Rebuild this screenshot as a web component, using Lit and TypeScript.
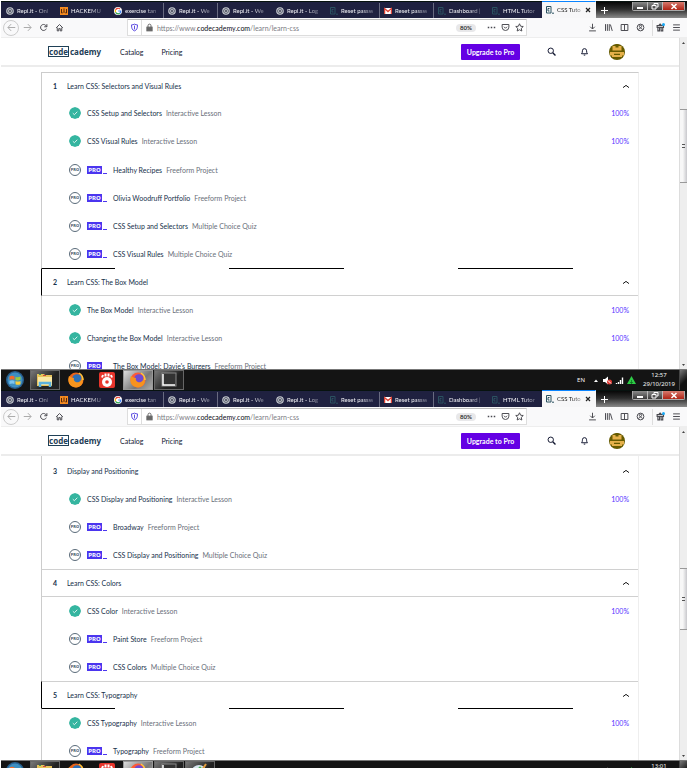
import { LitElement, html, css, svg, nothing } from "lit";
import { customElement, property } from "lit/decorators.js";
import { classMap } from "lit/directives/class-map.js";

type Item = { title: string; kind: string; pro?: boolean };
type Section = { no: number; title: string; look: string; items: Item[] };
type Tab = { icon: string; text: string; sep?: boolean; active?: boolean };

const LESSON = "Interactive Lesson";
const PROJECT = "Freeform Project";
const QUIZ = "Multiple Choice Quiz";

const firstSections: Section[] = [
  {
    no: 1, title: "Learn CSS: Selectors and Visual Rules", look: "flat",
    items: [
      { title: "CSS Setup and Selectors", kind: LESSON },
      { title: "CSS Visual Rules", kind: LESSON },
      { title: "Healthy Recipes", kind: PROJECT, pro: true },
      { title: "Olivia Woodruff Portfolio", kind: PROJECT, pro: true },
      { title: "CSS Setup and Selectors", kind: QUIZ, pro: true },
      { title: "CSS Visual Rules", kind: QUIZ, pro: true },
    ],
  },
  {
    no: 2, title: "Learn CSS: The Box Model", look: "dash-top",
    items: [
      { title: "The Box Model", kind: LESSON },
      { title: "Changing the Box Model", kind: LESSON },
      { title: "The Box Model: Davie's Burgers", kind: PROJECT, pro: true },
    ],
  },
];

const secondSections: Section[] = [
  {
    no: 3, title: "Display and Positioning", look: "cut",
    items: [
      { title: "CSS Display and Positioning", kind: LESSON },
      { title: "Broadway", kind: PROJECT, pro: true },
      { title: "CSS Display and Positioning", kind: QUIZ, pro: true },
    ],
  },
  {
    no: 4, title: "Learn CSS: Colors", look: "",
    items: [
      { title: "CSS Color", kind: LESSON },
      { title: "Paint Store", kind: PROJECT, pro: true },
      { title: "CSS Colors", kind: QUIZ, pro: true },
    ],
  },
  {
    no: 5, title: "Learn CSS: Typography", look: "dash-bottom",
    items: [
      { title: "CSS Typography", kind: LESSON },
      { title: "Typography", kind: PROJECT, pro: true },
    ],
  },
];

const tabs: Tab[] = [
  { icon: "repl", text: "Repl.it - Onl" },
  { icon: "hack", text: "HACKEMU" },
  { icon: "google", text: "exercise tan", sep: true },
  { icon: "repl", text: "Repl.it - We", sep: true },
  { icon: "repl", text: "Repl.it - We" },
  { icon: "repl", text: "Repl.it - Log" },
  { icon: "code", text: "Reset passw", sep: true },
  { icon: "mail", text: "Reset passw", sep: true },
  { icon: "code", text: "Dashboard |" },
  { icon: "code", text: "HTML Tutor" },
  { icon: "code", text: "CSS Tuto", active: true },
];

const tabIcon = (name: string) => {
  switch (name) {
    case "repl":
      return svg`<circle cx="4" cy="4" r="3.8" fill="#c9ccd2"/><circle cx="4" cy="4" r="2.4" fill="none" stroke="#555b6b"/><circle cx="4" cy="4" r="1" fill="#3d4252"/>`;
    case "hack":
      return svg`<rect width="8" height="8" fill="#f58a1f"/><path d="M1.5 2v4M4 1.5v3M6.5 2v4M2 6.5l2-2 2 2" stroke="#57280a" fill="none"/>`;
    case "google":
      return svg`<circle cx="4" cy="4" r="4" fill="#fff"/><path d="M6 2A2.8 2.8 0 0 0 1.6 2.8" stroke="#ea4335" fill="none" stroke-width="1.2"/><path d="M1.6 2.8a2.8 2.8 0 0 0 0 2.4" stroke="#fbbc05" fill="none" stroke-width="1.2"/><path d="M1.6 5.2A2.8 2.8 0 0 0 5.8 6.2" stroke="#34a853" fill="none" stroke-width="1.2"/><path d="M5.8 6.2A2.8 2.8 0 0 0 6.8 4H4.2" stroke="#4285f4" fill="none" stroke-width="1.2"/>`;
    case "mail":
      return svg`<rect y="1" width="8" height="6" rx="1" fill="#fff"/><path d="M.6 7V1.6L4 4.6l3.4-3V7" stroke="#dc4437" stroke-width="1.3" fill="none"/>`;
    default:
      return svg`<path d="M.5 .5h4.5v6.500H.5z" fill="none" stroke="#2b5260"/><path d="M3.500 2.500H2v2.500h1.500M6 7.200h2" stroke="#2b5260" fill="none"/>`;
  }
};

const glyphs: Record<string, unknown> = {
  back: svg`<path d="M11 6H1.500M5.500 1.500L1.200 6l4.300 4.500"/>`,
  forward: svg`<path d="M1 6h9.500M6.500 1.500L10.800 6l-4.300 4.500"/>`,
  reload: svg`<path d="M9.800 7.500A4 4 0 1 1 9 3.200L10.500 5M10.500 1.500V5H7"/>`,
  home: svg`<path d="M1.500 6.500L6 2l4.500 4.500M3 6v4.500h2v-3h2v3h2V6"/>`,
  shield: svg`<path d="M6 1.500c1.500 .8 2.500 1 4 1C10 7 9 9.500 6 10.500 3 9.500 2 7 2 2.500c1.500 0 2.500-.2 4-1zM6 3.500v5"/>`,
  lock: svg`<rect x="2.500" y="5.500" width="7" height="5" fill="currentColor"/><path d="M4 5.500v-2a2 2 0 0 1 4 0v2"/>`,
  dots: svg`<path d="M1 6h2M5 6h2M9 6h2" stroke-width="2"/>`,
  pocket: svg`<path d="M1.500 2h9v3.500a4.500 4.500 0 0 1-9 0zM4 5l2 2 2-2"/>`,
  star: svg`<path d="M6 1l1.500 3.300 3.500.4-2.600 2.400.7 3.600L6 9l-3.100 1.700.7-3.600L1 4.700l3.500-.4z"/>`,
  download: svg`<path d="M6 1v7M3 5l3 3 3-3M1.500 10.500h9"/>`,
  library: svg`<path d="M2 1.500v9M4.500 1.500v9M7 1.500v9M8.500 2l2.500 8.500"/>`,
  sidebar: svg`<path d="M1.500 2h9v8h-9zM6 2v8"/>`,
  account: svg`<circle cx="6" cy="6" r="4.500"/><circle cx="6" cy="4.500" r="1.500"/><path d="M3.500 9c.5-3 4.500-3 5 0"/>`,
  gift: svg`<path d="M1.500 3.500h8.500V6H1.500zM2.500 6v4.500h2.200V6M6.800 6v4.500H9V6M4 3l1.500-1.500L7 3" stroke-width="1.500"/><circle cx="10" cy="2" r="2" fill="#19a8f5" stroke="none"/>`,
  menu: svg`<path d="M1.500 2.500h9M1.500 6h9M1.500 9.500h9"/>`,
  search: svg`<circle cx="5" cy="5" r="3.600"/><path d="M7.700 7.700l3.600 3.600" stroke-width="1.800"/>`,
  bell: svg`<path d="M2 9c1-1 1.200-2 1.200-4a2.800 2.800 0 0 1 5.600 0c0 2 .2 3 1.200 4zM5 10.800h2"/>`,
  up: svg`<path d="M4 7.500l4-3 4 3"/>`,
};

const glyph = (name: string) => html`<svg class="glyph" viewBox="0 0 12 12" aria-hidden="true">${glyphs[name]}</svg>`;
const iconButton = (name: string, label: string) =>
  html`<button class="icon ${name}" aria-label=${label}>${glyph(name)}</button>`;

const base = css`
  * { box-sizing: border-box; }
  button { font: inherit; color: inherit; background: none; border: 0; padding: 0; }
  a { color: inherit; text-decoration: none; }
  svg { display: block; flex: none; }
  .glyph { width: 9px; height: 9px; fill: none; stroke: currentColor; stroke-width: 1.3; }
`;

@customElement("browser-chrome")
export class BrowserChrome extends LitElement {
  static styles = [base, css`
    :host { display: block; font: 6px/8px Lato, sans-serif; }
    .tabs { display: flex; height: 17px; padding: 1px 0 0 1px; background: #1f2140; border-top: 1px solid #07120f; color: #f4f4f8; }
    .tab { flex: 0 1 54px; min-width: 0; display: flex; align-items: center; gap: 3px; padding-left: 4px; border-right: 1px solid transparent; }
    .tab svg { width: 8px; height: 8px; }
    .tab.sep { border-right-color: #686a80; }
    .name { white-space: nowrap; -webkit-mask-image: linear-gradient(90deg, #000 60%, #0005); }
    .tab.active { margin-top: -2px; padding-right: 4px; background: #f7f7f8; border-top: 1px solid #0a84ff; color: #222; }
    .close { width: 6px; margin-left: auto; display: grid; place-items: center; }
    .close svg { width: 6px; height: 6px; }
    .caption { flex: 1; margin-top: -1px; display: flex; justify-content: space-between; align-items: flex-start; background: linear-gradient(#080808, #2d2d2d 45%, #8a8a8a); }
    .add { width: 16px; height: 16px; display: grid; place-items: center; }
    .add svg { width: 8px; height: 8px; }
    .window { display: flex; height: 9px; margin-right: 2px; border: 1px solid #aaa; border-top: 0; border-radius: 0 0 2px 2px; overflow: hidden; }
    .window button { width: 15px; background: linear-gradient(#8a8a8a, #3a3a3a); border-right: 1px solid #bbb; display: grid; place-items: center; }
    .window .end { width: 21px; border: 0; background: linear-gradient(#d67a6e, #b02314); }
    .window svg { width: 8px; height: 7px; }
    .bar { display: flex; align-items: center; height: 20px; background: #f9f9fa; border-bottom: 1px solid #eee; color: #4a4a50; padding: 0 3px 0 2px; }
    .icon { width: 16px; height: 16px; display: grid; place-items: center; flex: none; }
    .back { border: 1px solid #ccc; border-radius: 8px; color: #aaa; }
    .forward { color: #aaa; }
    .address { flex: 0 1 400px; min-width: 120px; display: flex; align-items: center; height: 17px; margin: 0 auto 0 60px; background: #fff; border: 1px solid #ddd; border-top-color: #bbb; border-radius: 1px; }
    .address .icon { width: 14px; }
    .shield { color: #5b4be0; border-right: 1px solid #ddd; }
    .lock { color: #666; }
    .url { flex: 1; min-width: 0; font-size: 7px; line-height: 10px; padding-left: 1px; color: #7c7c84; white-space: nowrap; }
    .url b { font-weight: normal; color: #0c0c20; }
    .zoom { width: 20px; height: 8px; border-radius: 4px; background: #e8e8ea; text-align: center; font-weight: bold; margin-right: 8px; color: #333; }
    .right { display: flex; }
    .gift { margin-left: 4px; border-left: 1px solid #ddd; }
  `];

  render() {
    return html`
      <div class="tabs" role="tablist">
        ${tabs.map((t) => html`
          <div role="tab" class=${classMap({ tab: true, sep: !!t.sep, active: !!t.active })}>
            <svg viewBox="0 0 8 8" aria-hidden="true">${tabIcon(t.icon)}</svg>
            <span class="name">${t.text}</span>
            ${t.active ? html`<button class="close" aria-label="Close tab"><svg viewBox="0 0 6 6"><path d="M1 1l4 4M5 1L1 5" stroke="#222" stroke-width="1.200"/></svg></button>` : nothing}
          </div>`)}
        <div class="caption">
          <button class="add" aria-label="New tab"><svg viewBox="0 0 8 8"><path d="M4.500 1v7M1 4.500h7" stroke="#fff"/></svg></button>
          <div class="window">
            <button aria-label="Minimise"><svg viewBox="0 0 8 7"><path d="M1 5h6" stroke="#fff" stroke-width="2"/></svg></button>
            <button aria-label="Restore"><svg viewBox="0 0 8 7"><path d="M3 2V.5h4V4H5.500M1 2.500h4v3.500H1z" stroke="#fff" fill="none"/></svg></button>
            <button class="end" aria-label="Close"><svg viewBox="0 0 8 7"><path d="M1.500 1l5 5M6.500 1l-5 5" stroke="#fff" stroke-width="1.600"/></svg></button>
          </div>
        </div>
      </div>
      <div class="bar">
        ${iconButton("back", "Back")}${iconButton("forward", "Forward")}${iconButton("reload", "Reload")}${iconButton("home", "Home")}
        <div class="address">
          ${iconButton("shield", "Tracking protection")}${iconButton("lock", "Connection secure")}
          <div class="url" role="textbox" aria-label="Address">https://www.<b>codecademy.com</b>/learn/learn-css</div>
          <button class="zoom">80%</button>
          ${iconButton("dots", "Page actions")}${iconButton("pocket", "Save to Pocket")}${iconButton("star", "Bookmark")}
        </div>
        <div class="right">
          ${iconButton("download", "Downloads")}${iconButton("library", "Library")}${iconButton("sidebar", "Sidebars")}${iconButton("account", "Account")}${iconButton("gift", "What's new")}${iconButton("menu", "Menu")}
        </div>
      </div>`;
  }
}

@customElement("course-page")
export class CoursePage extends LitElement {
  @property({ attribute: false }) sections: Section[] = [];
  @property({ attribute: false }) lower = false;

  static styles = [base, css`
    :host { display: flex; overflow: hidden; background: #fff; font: 7px/10px Lato, sans-serif; color: #16304a; }
    .content { flex: 1; min-width: 0; }
    header { display: flex; align-items: center; height: 29px; padding: 0 54px 0 47px; border-bottom: 2px solid #ececec; }
    .logo { display: flex; align-items: center; font: bold 8px/9px "Noto Sans", sans-serif; color: #1f4056; margin-right: 19px; }
    .logo span { border: 1px solid #1f4056; margin-right: 1px; }
    .nav { margin-right: 18px; color: #10162f; }
    .upgrade { width: 59px; height: 16px; margin-left: auto; background: #6400e4; color: #fff; font-weight: bold; border-radius: 1px; white-space: nowrap; }
    .icon { width: 13px; margin-left: 20px; display: grid; place-items: center; color: #10162f; }
    .icon.search { margin-left: 25px; }
    .avatar { width: 16px; height: 16px; margin-left: 18px; }
    .card { margin: 5px 40px 0; border: 1px solid #ccc; border-right-color: #eee; border-bottom: 0; }
    .card.lower { margin-top: 0; border-top: 0; }
    .head { display: flex; align-items: center; height: 28px; margin-left: -1px; padding: 0 9px 0 11px; border: solid #d0d0d0; border-width: 1px 0; border-left: 1px solid #ccc; }
    .no { width: 14px; font-weight: bold; }
    h2 { flex: 1; margin: 0; font: inherit; }
    .flat .head { height: 26px; border-top: 0; border-bottom: 0; }
    .flat .plain + .pro { margin-top: 1px; }
    .cut .head { height: 29px; padding-top: 1px; border-top: 0; border-bottom: 0; }
    .dash-top .head { border-top-color: transparent; border-left-color: #000; background: linear-gradient(90deg, #000 115px, transparent 115px) -41px 0 / 229px 1px repeat-x border-box; }
    .dash-bottom .head { border-bottom-color: transparent; border-left-color: #000; background: linear-gradient(90deg, #000 115px, transparent 115px) -41px 100% / 229px 1px repeat-x border-box; }
    ul { margin: 0; padding: 0; list-style: none; }
    li { display: flex; align-items: center; height: 28px; padding: 0 9px 0 27px; white-space: nowrap; }
    .mark { width: 12px; height: 12px; margin-right: 6px; flex: none; border-radius: 6px; }
    .ring { display: grid; place-items: center; border: 1px solid #5a6b7a; font: bold 4px/4px "Noto Sans", sans-serif; color: #3b5063; }
    .tag { display: flex; margin-right: 6px; width: 20px; color: #4b35ef; }
    .tag b { width: 15px; height: 8px; background: #4b35ef; color: #fff; font: bold 6px/8px "Noto Sans", sans-serif; text-align: center; }
    .tag i { width: 4px; margin-left: 1px; border-bottom: 1px solid #4b35ef; }
    .kind { margin-left: 4px; color: #6a6f7a; }
    .done { margin-left: auto; color: #5533ff; }
    .chevron { color: #111; }
    .scroll { width: 8px; flex: none; display: flex; flex-direction: column; align-items: center; background: #eee; border-left: 1px solid #ddd; color: #444; }
    .scroll .arrow { height: 9px; display: grid; place-items: center; }
    .scroll .arrow svg { width: 3px; height: 2px; }
    .gap { height: 62px; }
    .gap.lower { height: 132px; }
    .thumb { width: 7px; height: 74px; display: grid; place-items: center; background: linear-gradient(90deg, #f7f7f7 40%, #c8c8cc); border: solid #999; border-width: 1px 0; }
    .thumb.lower { height: 62px; }
    .grip { width: 3px; height: 4px; border: solid #555; border-width: 1px 0; }
    .rest { flex: 1; }
  `];

  private item(i: Item) {
    return html`<li class=${i.pro ? "pro" : "plain"}>
      ${i.pro
        ? html`<span class="mark ring">PRO</span><span class="tag"><b>PRO</b><i></i></span>`
        : html`<svg class="mark" viewBox="0 0 12 12" aria-label="Completed"><circle cx="6" cy="6" r="6" fill="#35b5a0"/><path d="M3.800 6.200L5.400 7.700l2.900-3" fill="none" stroke="#fff" stroke-width=".8"/></svg>`}
      <a href="#">${i.title}</a><span class="kind">${i.kind}</span>
      ${i.pro ? nothing : html`<span class="done">100%</span>`}
    </li>`;
  }

  render() {
    const lower = this.lower;
    return html`
      <div class="content">
        <header>
          <a class="logo" href="#" aria-label="Codecademy"><span>code</span>cademy</a>
          <a class="nav" href="#">Catalog</a><a class="nav" href="#">Pricing</a>
          <button class="upgrade">Upgrade to Pro</button>
          ${iconButton("search", "Search")}${iconButton("bell", "Notifications")}
          <svg class="avatar" viewBox="0 0 16 16" aria-label="Profile"><circle cx="8" cy="8" r="8" fill="#665b00"/><path d="M3.500 2h9v4.500h-9zM1 8h14v3.500h-2V13H3v-1.500H1z" fill="#e5b04a"/><path d="M6.500 0h3v3.500h-3zM5 9.800h6v1.200H5z" fill="#665b00"/></svg>
        </header>
        <div class=${classMap({ card: true, lower })}>
          ${this.sections.map((s) => html`
            <section class=${s.look}>
              <div class="head">
                <span class="no">${s.no}</span><h2>${s.title}</h2>
                <button class="chevron" aria-label="Collapse section">${glyph("up")}</button>
              </div>
              <ul>${s.items.map((i) => this.item(i))}</ul>
            </section>`)}
        </div>
      </div>
      <div class="scroll" aria-hidden="true">
        <span class="arrow"><svg viewBox="0 0 3 2"><path d="M0 2L1.500 0 3 2z" fill="currentColor"/></svg></span>
        <span class=${classMap({ gap: true, lower })}></span>
        <span class=${classMap({ thumb: true, lower })}><span class="grip"></span></span>
        <span class="rest"></span>
        <span class="arrow"><svg viewBox="0 0 3 2"><path d="M0 0L1.500 2 3 0z" fill="currentColor"/></svg></span>
      </div>`;
  }
}

@customElement("task-bar")
export class TaskBar extends LitElement {
  @property() time = "";
  @property({ attribute: false }) paint = false;

  static styles = [base, css`
    :host { display: flex; height: 20px; background: #141414; border-top: 1px solid #777; color: #f4f4f4; font: 6px/9px "Noto Sans", sans-serif; }
    .start { width: 28px; display: grid; place-items: center; }
    svg { width: 18px; height: 18px; }
    .app { width: 30px; margin-left: 1px; display: grid; place-items: center; }
    .open { border: 1px solid #666; background: linear-gradient(135deg, #777, #222 60%); }
    .hot { border: 1px solid #999; background: linear-gradient(135deg, #ddd, #777 60%, #aaa); }
    .tray { margin-left: auto; display: flex; align-items: center; gap: 3px; }
    .tray svg { width: 9px; height: 9px; }
    .lang { margin-right: 3px; }
    .clock { width: 38px; margin-left: 1px; text-align: center; white-space: nowrap; }
    .peek { width: 8px; margin-left: 1px; border-left: 1px solid #444; background: linear-gradient(135deg, #777, #111 60%); }
  `];

  render() {
    const fox = (body: string, core: string) => svg`
      <circle cx="9" cy="9" r="7.500" fill=${body}/><circle cx="10" cy="8" r="4.800" fill=${core}/>
      <path d="M2 5c2 1 3 2 5 2-1 3 2 5 5 4 2-1 3-3 2.500-6 3 4 1.500 11-5.500 11.500C2 16 0 10 2 5z" fill="#f7931e"/><path d="M12 2c3 2 4 4 4 7" fill="none" stroke="#ffc83d" stroke-width="1.500"/>`;
    return html`
      <button class="start" aria-label="Start"><svg viewBox="0 0 18 18"><circle cx="9" cy="9" r="9" fill="#285f8e"/><circle cx="9" cy="9" r="7.500" fill="#3d8fc2"/><path d="M3.500 5.500c2-1 3.500-.8 5 .1v3.200c-1.500-.9-3.200-.9-5 0z" fill="#f26b2a"/><path d="M9.500 5.800c1.500.7 3 .7 5-.2v3.200c-1.800.8-3.500.8-5 .1z" fill="#9ccb3b"/><path d="M3.500 9.800c1.800-.8 3.500-.8 5 0V13c-1.500-.8-3-.9-5 .1z" fill="#7cc5f0"/><path d="M9.500 10c1.500.7 3.200.7 5 0v3.200c-2 .9-3.500.8-5 0z" fill="#fbcf3b"/></svg></button>
      <button class="app open" aria-label="Explorer"><svg viewBox="0 0 18 18"><path d="M1 3h7l1 1h7v11H1z" fill="#e7c35b"/><path d="M2 6h14v8H2z" fill="#fbe9a4"/><path d="M4 16v-4h10v4" fill="none" stroke="#5cb2dc" stroke-width="2.500"/><path d="M3 3.500h2" stroke="#3aa04a"/><path d="M7 4.500h3" stroke="#d0483c"/></svg></button>
      <button class="app" aria-label="Firefox"><svg viewBox="0 0 18 18">${fox("#e8641b", "#2c6fb7")}</svg></button>
      <button class="app" aria-label="Gom Player"><svg viewBox="0 0 18 18"><rect x="1" y="1" width="16" height="16" rx="2" fill="#e8352b"/><circle cx="9" cy="11" r="5" fill="#fff"/><circle cx="9" cy="11" r="1.800" fill="#e8352b"/><path d="M4 6.500L5 4M7.500 5.500V2.500M10.500 5.500V2.500M14 6.500L13 4" stroke="#fff" stroke-width="2"/></svg></button>
      <button class="app hot" aria-label="Firefox window"><svg viewBox="0 0 18 18">${fox("#ff5a36", "#6f4bd1")}</svg></button>
      <button class="app open" aria-label="Console"><svg viewBox="0 0 18 18"><rect x="2" y="2" width="14" height="13" fill="#333" stroke="#888"/><path d="M3 3v11h12" fill="none" stroke="#fff" stroke-width="1.500"/></svg></button>
      ${this.paint ? html`<button class="app open" aria-label="Paint"><svg viewBox="0 0 18 18"><ellipse cx="8" cy="9" rx="7" ry="6" fill="#d6e4ee"/><circle cx="5" cy="8" r="1.500" fill="#3f8fd0"/><circle cx="9" cy="6" r="1.500" fill="#48b04a"/><path d="M9 11l6-9" stroke="#e09a3a" stroke-width="2"/></svg></button>` : nothing}
      <div class="tray">
        <span class="lang">EN</span>
        <svg viewBox="0 0 9 9"><path d="M3 6l2-2.500L7 6z" fill="#fff"/></svg>
        <svg viewBox="0 0 9 9"><path d="M0 3h2l3-2.500v8L2 6H0z" fill="#fff"/><circle cx="6.500" cy="6" r="2.500" fill="#e03a34"/><path d="M5 4.500l3 3" stroke="#fff"/></svg>
        <svg viewBox="0 0 9 9"><path d="M1.500 8V7M3.500 8V6M5.500 8V4M7.500 8V1.500" stroke="#fff" stroke-width="1.400"/></svg>
        <svg viewBox="0 0 9 9"><path d="M4.500 0L9 8H0z" fill="#2ecb46"/><path d="M4.500 4v4M3 6.500h3" stroke="#0b6a1c" stroke-width=".7"/></svg>
        <div class="clock">${this.time}<br>29/10/2019</div>
      </div>
      <div class="peek"></div>`;
  }
}

@customElement("app-root")
export class AppRoot extends LitElement {
  static styles = css`
    :host { display: block; height: 100vh; overflow: hidden; background: #fff; }
    .desktop { display: flex; flex-direction: column; padding: 1px 5px 0 1px; }
    .page { height: 331px; }
    .page.tall { height: 333px; }
  `;

  render() {
    return html`<main class="desktop">
      <browser-chrome></browser-chrome>
      <course-page class="page" .sections=${firstSections}></course-page>
      <task-bar time="12:57"></task-bar>
      <browser-chrome></browser-chrome>
      <course-page class="page tall" .sections=${secondSections} .lower=${true}></course-page>
      <task-bar time="13:01" .paint=${true}></task-bar>
    </main>`;
  }
}
